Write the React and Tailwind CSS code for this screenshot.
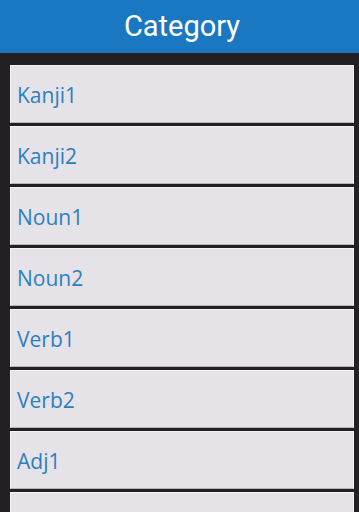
const items = ["Kanji1", "Kanji2", "Noun1", "Noun2", "Verb1", "Verb2", "Adj1", ""];

export default function App() {
  return (
    <div className="w-[359px] h-[512px] overflow-hidden bg-[#222022] font-['Roboto',sans-serif]">
      <div className="h-[53px] bg-[#1a78c2] flex items-center justify-center">
        <span className="text-white text-[29px] leading-none pl-[5px]">Category</span>
      </div>
      <div className="pl-[10px] pr-[5px] pt-[12px] flex flex-col gap-[3px]">
        {items.map((name, i) => (
          <div
            key={i}
            className="h-[58px] shrink-0 bg-[#e6e3e8] border border-[#f4f2f5] border-b-[#b8b6ba] flex items-center pl-[6px]"
          >
            <span className="text-[#2b80c2] text-[21px] leading-none font-['Open_Sans',sans-serif] pt-[2px]">{name}</span>
          </div>
        ))}
      </div>
    </div>
  );
}
